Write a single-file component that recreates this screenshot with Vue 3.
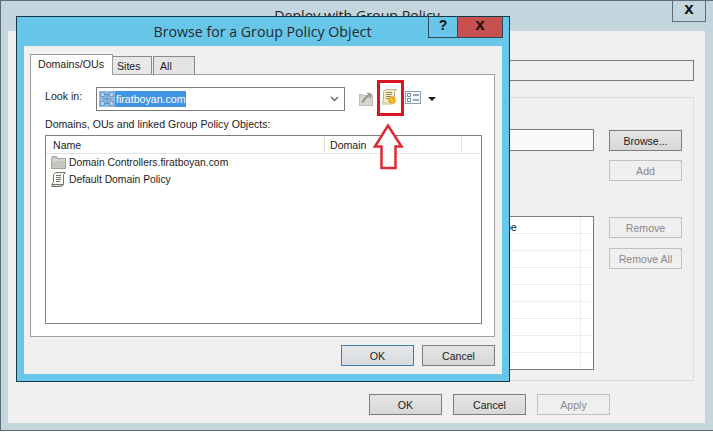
<script setup>
const backRows = [1, 2, 3, 4, 5, 6, 7, 8]
</script>

<template>
  <div class="desktop">
    <section class="back">
      <header class="back-title">
        <span class="back-title-text">Deploy with Group Policy</span>
        <span class="back-close">x</span>
      </header>
      <div class="back-body">
        <div class="back-field"></div>
        <div class="back-group">
          <div class="back-left">
            <div class="back-input"></div>
            <div class="back-list">
              <div class="back-row back-head"><span class="back-type">Type</span><i class="back-cell"></i></div>
              <div v-for="r in backRows" :key="r" class="back-row"><i class="back-cell"></i></div>
            </div>
          </div>
          <div class="back-side">
            <button class="btn">Browse...</button>
            <button class="btn off add">Add</button>
            <button class="btn off remove">Remove</button>
            <button class="btn off removeall">Remove All</button>
          </div>
        </div>
        <div class="back-foot">
          <button class="btn">OK</button>
          <button class="btn">Cancel</button>
          <button class="btn off">Apply</button>
        </div>
      </div>
    </section>

    <section class="dlg">
      <header class="dlg-title">
        <span class="dlg-title-text">Browse for a Group Policy Object</span>
        <span class="cap help">?</span>
        <span class="cap close">x</span>
      </header>
      <div class="dlg-body">
        <div class="tabs">
          <span class="tab active">Domains/OUs</span>
          <span class="tab sites">Sites</span>
          <span class="tab all">All</span>
        </div>
        <div class="panel">
          <div class="look">
            <label class="look-label">Look in:</label>
            <div class="combo">
              <span class="combo-sel">
                <svg class="domain-ico" width="16" height="16" viewBox="0 0 16 16">
                  <rect width="16" height="16" fill="#8fbbe8" />
                  <path d="M1.500 1.500h4v4h-4zM10.500 1.500h4v4h-4zM1.500 10.500h4v4h-4zM10.500 10.500h4v4h-4z" fill="#bcd3e6" stroke="#6e9cc6" />
                  <path d="M5.500 3.500h5M5.500 12.500h5M8 3.500v9M3.500 8h9" stroke="#5f90bd" />
                </svg>
                <span class="combo-text">firatboyan.com</span>
              </span>
              <svg class="chev" width="9" height="6" viewBox="0 0 9 6">
                <path d="M1 1l3.500 3.500L8 1" fill="none" stroke="#666" stroke-width="1.400" />
              </svg>
            </div>
            <div class="tools">
              <svg class="tool-up" width="15" height="15" viewBox="0 0 15 15">
                <path d="M0.500 3.500h3l1 1h9v10h-13z" fill="#d6d6cc" stroke="#bcbcb2" />
                <path d="M3.500 11.500c1-3 3-5 6-7" fill="none" stroke="#94948a" stroke-width="1.800" />
                <path d="M7.500 1.500l5.500 1-1.500 5.500z" fill="#9c9c92" />
              </svg>
              <svg class="tool-new" width="16" height="17" viewBox="0 0 16 17">
                <path d="M4.500 0.500h11l-2 2.500v11h-12.500l1.500-2.500v-9z" fill="#f5ecc8" stroke="#bcb18a" />
                <path d="M0.500 16h11l2-2h-12z" fill="#e8dcae" />
                <path d="M5 3.500h6M5 5.500h6M5 7.500h5M5 9.500h3" stroke="#8c866a" />
                <circle cx="11" cy="11" r="3.800" fill="#f2a917" />
                <path d="M9 9.500l3 3" stroke="#fbd25a" stroke-width="1.500" />
              </svg>
              <svg class="tool-view" width="16" height="13" viewBox="0 0 16 13">
                <rect x="0.500" y="0.500" width="15" height="12" fill="#f4f8fc" stroke="#8aa0b8" />
                <path d="M2.500 2.500h3v3h-3zM2.500 7.500h3v3h-3z" fill="#fff" stroke="#6d87a4" />
                <path d="M8 4h6M8 9h6" stroke="#44586e" stroke-width="1.200" />
              </svg>
              <svg class="tool-drop" width="8" height="4" viewBox="0 0 8 4">
                <path d="M0 0h8L4 4z" fill="#1a1a1a" />
              </svg>
            </div>
          </div>
          <div class="list-label">Domains, OUs and linked Group Policy Objects:</div>
          <div class="list">
            <div class="list-head">
              <span class="col-name">Name</span>
              <span class="col-domain">Domain</span>
              <span class="col-rest"></span>
            </div>
            <div class="item">
              <svg width="15" height="13" viewBox="0 0 15 13">
                <path d="M0.500 2.500l1-2h4l1 2h8v10h-14z" fill="#c6c6c2" stroke="#a0a09c" />
                <path d="M1 4h13" stroke="#e2e2de" />
              </svg>
              <span>Domain Controllers.firatboyan.com</span>
            </div>
            <div class="item">
              <svg width="15" height="15" viewBox="0 0 15 15">
                <path d="M4.500 0.500h10l-2 2v10H0.500l2-2v-8z" fill="#f7f7f2" stroke="#77776e" />
                <path d="M0.500 14.500h10l2-2h-10z" fill="#d6d6ce" stroke="#77776e" />
                <path d="M5 3.500h5M5 5.500h5M5 7.500h5M5 9.500h4" stroke="#77776e" />
              </svg>
              <span>Default Domain Policy</span>
            </div>
          </div>
        </div>
        <div class="dlg-foot">
          <button class="btn primary">OK</button>
          <button class="btn">Cancel</button>
        </div>
      </div>
    </section>

    <div class="mark"></div>
    <svg class="arrow" width="32" height="48" viewBox="0 0 32 48">
      <path d="M15 2.500L28.500 23.500H22.500V45H8.500V23.500H2z" fill="#fff" stroke="#dd2a33" stroke-width="2.500" />
    </svg>
  </div>
</template>

<style scoped>
.desktop {
  position: relative;
  width: 713px;
  height: 432px;
  overflow: hidden;
  background: #fff;
  font-family: "Liberation Sans", Arial, sans-serif;
  font-size: 10.6px;
  color: #1c1c1c;
}
button {
  font: inherit;
  color: inherit;
  padding: 0;
}

/* Back window */
.back {
  height: 431px;
  box-sizing: border-box;
  background: #c4d6dd;
  border: 1px solid #5f6e76;
  border-right: 0;
  display: flex;
  flex-direction: column;
}
.back-title {
  height: 30px;
  flex: none;
  display: flex;
  justify-content: center;
  position: relative;
}
.back-title-text {
  font-family: "Open Sans", sans-serif;
  font-size: 14.2px;
  line-height: 20px;
  margin: 5px 0 0 0;
  color: #222;
}
.back-close {
  position: absolute;
  left: 671px;
  top: -1px;
  width: 32px;
  height: 21px;
  box-sizing: content-box;
  border: 1px solid #5f6e76;
  border-top: 0;
  text-align: center;
  font-size: 17px;
  font-weight: 700;
  line-height: 18px;
  color: #111;
}
.back-body {
  margin: 0 8px 0 7px;
  height: 392px;
  flex: none;
  box-sizing: border-box;
  background: #f0f0f0;
  padding: 29px 11px 0 12px;
}
.back-field {
  height: 21px;
  box-sizing: border-box;
  border: 1px solid #7a7a7a;
}
.back-group {
  margin-top: 16px;
  height: 284px;
  box-sizing: border-box;
  border: 1px solid #dcdcdc;
  padding: 31px 11px 0 12px;
  display: flex;
  gap: 15px;
}
.back-left {
  flex: 1;
  min-width: 0;
}
.back-input {
  height: 22px;
  box-sizing: border-box;
  border: 1px solid #7a7a7a;
  background: #fafafa;
}
.back-list {
  margin-top: 65px;
  height: 154px;
  box-sizing: border-box;
  border: 1px solid #7a7a7a;
  background: #fff;
  padding: 0 2px 0 0;
  overflow: hidden;
}
.back-row {
  height: 17px;
  box-sizing: border-box;
  border-bottom: 1px solid #ececec;
  display: flex;
  justify-content: flex-end;
}
.back-row:last-child {
  border-bottom: 0;
}
.back-cell {
  width: 11px;
  box-sizing: border-box;
  border-left: 1px solid #ececec;
}
.back-head {
  line-height: 20px;
}
.back-type {
  font-size: 11px;
  margin-right: 63px;
}
.back-side {
  width: 73px;
  flex: none;
  display: flex;
  flex-direction: column;
  padding-top: 1px;
}
.back-side .btn {
  flex: none;
}
.add {
  margin-top: 9px;
}
.remove {
  margin-top: 36px;
}
.removeall {
  margin-top: 10px;
}
.back-foot {
  margin-top: 13px;
  margin-right: 84px;
  display: flex;
  justify-content: flex-end;
  gap: 11px;
}

/* Buttons */
.btn {
  width: 73px;
  height: 21px;
  box-sizing: border-box;
  border: 1px solid #7d7d7d;
  background: linear-gradient(#e4e4e4, #d8d8d8);
  text-align: center;
  font-size: 10.6px;
}
.btn.off {
  border-color: #c0c0c0;
  background: #efefef;
  color: #8a8a8a;
}
.btn.primary {
  border-color: #3c7fb1;
  background: linear-gradient(#e6e9ec, #d6dade);
}

/* Front dialog */
.dlg {
  position: absolute;
  left: 16px;
  top: 16px;
  width: 494px;
  height: 366px;
  box-sizing: border-box;
  background: #68c7e8;
  border: 1px solid #16394a;
  display: flex;
  flex-direction: column;
}
.dlg-title {
  height: 29px;
  flex: none;
  display: flex;
  align-items: flex-start;
  padding-right: 6px;
}
.dlg-title-text {
  flex: 1;
  padding-left: 80px;
  text-align: center;
  font-family: "Open Sans", sans-serif;
  font-size: 14.2px;
  line-height: 20px;
  margin-top: 5px;
  color: #1f2a30;
}
.cap {
  flex: none;
  height: 21px;
  box-sizing: border-box;
  text-align: center;
  font-weight: 700;
  color: #111;
  border: 1px solid #2c4a58;
  border-top: 0;
}
.help {
  width: 29px;
  font-size: 14px;
  line-height: 17px;
  border-right: 0;
}
.close {
  width: 46px;
  background: #c75050;
  font-size: 17px;
  line-height: 16px;
}
.dlg-body {
  flex: 1;
  margin: 0 7px 7px 7px;
  background: #f0f0f0;
  padding: 8px 6px 0 6px;
  display: flex;
  flex-direction: column;
}
.tabs {
  display: flex;
  align-items: flex-end;
  height: 21px;
  position: relative;
  z-index: 1;
}
.tab {
  box-sizing: border-box;
  border: 1px solid #8a8a8a;
  border-bottom: 0;
  background: #e8e8e8;
  height: 18px;
  line-height: 19px;
  padding-left: 4px;
  margin-right: 1px;
  margin-bottom: 1px;
}
.tab.active {
  width: 83px;
  height: 21px;
  background: #fff;
  line-height: 18px;
  padding-left: 7px;
  margin: 0;
  border-color: #9a9a9a;
}
.sites {
  width: 39px;
  border-left: 0;
}
.all {
  width: 42px;
  margin-right: 0;
  background: #e4e4e4;
  padding-left: 6px;
}
.panel {
  width: 465px;
  height: 263px;
  box-sizing: border-box;
  margin-top: -1px;
  background: #fff;
  border: 1px solid #a0a0a0;
  padding: 12px 13px 0 14px;
}
.look {
  display: flex;
  align-items: flex-start;
  height: 24px;
}
.look-label {
  width: 51px;
  flex: none;
  line-height: 18px;
}
.combo {
  width: 249px;
  height: 24px;
  flex: none;
  box-sizing: border-box;
  border: 1px solid #7a7a7a;
  background: #fff;
  display: flex;
  align-items: center;
  padding: 0 5px 0 2px;
  justify-content: space-between;
}
.combo-sel {
  display: flex;
  align-items: center;
  background: #3f95e4;
  height: 16px;
}
.domain-ico {
  display: block;
}
.combo-text {
  color: #fff;
  padding: 0 1px;
}
.chev {
  display: block;
}
.tools {
  position: relative;
  flex: 1;
}
.tool-up {
  position: absolute;
  left: 14px;
  top: 4px;
}
.tool-new {
  position: absolute;
  left: 36px;
  top: 2px;
}
.tool-view {
  position: absolute;
  left: 60px;
  top: 4px;
}
.tool-drop {
  position: absolute;
  left: 83px;
  top: 10px;
}
.list-label {
  margin-top: 5px;
  line-height: 16px;
}
.list {
  margin-top: 3px;
  width: 437px;
  height: 189px;
  box-sizing: border-box;
  border: 1px solid #7f7f7f;
}
.list-head {
  display: flex;
  height: 17px;
  border-bottom: 1px solid #e4e4e4;
  line-height: 18px;
  margin-right: 1px;
}
.list-head span {
  box-sizing: border-box;
  border-right: 1px solid #e4e4e4;
  flex: none;
}
.col-name {
  width: 279px;
  padding-left: 7px;
}
.col-domain {
  width: 137px;
  padding-left: 5px;
}
.list-head .col-rest {
  flex: 1;
  border-right: 0;
}
.item {
  display: flex;
  align-items: center;
  gap: 3px;
  height: 17px;
  padding-left: 5px;
  font-size: 10.35px;
}
.item svg {
  flex: none;
  display: block;
}
.dlg-foot {
  display: flex;
  justify-content: flex-end;
  gap: 8px;
  margin-top: 8px;
  margin-right: 1px;
}

/* Annotations */
.mark {
  position: absolute;
  left: 377px;
  top: 80px;
  width: 27px;
  height: 36px;
  box-sizing: border-box;
  border: 3px solid #d8161f;
}
.arrow {
  position: absolute;
  left: 373px;
  top: 123px;
}
</style>
